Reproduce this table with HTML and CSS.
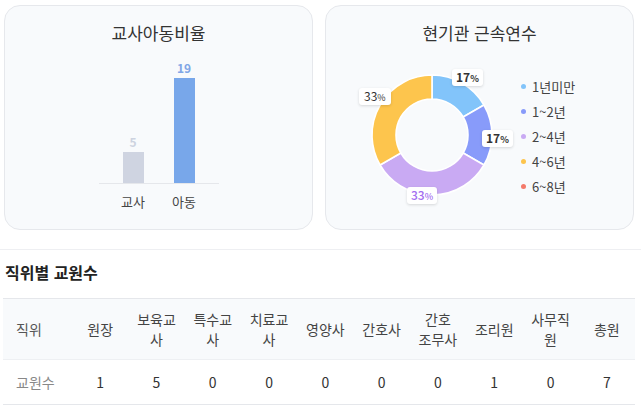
FILE: index.html
```html
<!DOCTYPE html>
<html lang="ko">
<head>
<meta charset="utf-8">
<title>교원 현황</title>
<link rel="stylesheet" href="styles.css">
</head>
<body>
<div class="cards">
  <section class="card">
    <h2 class="card-title">교사아동비율</h2>
    <div class="bar-chart">
      <div class="plot">
        <div class="bar-col">
          <span class="bar-value teacher">5</span>
          <div class="bar teacher" style="height:31px"></div>
        </div>
        <div class="bar-col">
          <span class="bar-value child">19</span>
          <div class="bar child" style="height:105px"></div>
        </div>
      </div>
      <div class="x-labels">
        <span class="x-label">교사</span>
        <span class="x-label">아동</span>
      </div>
    </div>
  </section>
  <section class="card">
    <h2 class="card-title">현기관 근속연수</h2>
    <div class="donut-row">
      <div class="donut">
        <svg class="donut-svg" viewBox="0 0 120 120" width="120" height="120">
          <path class="seg seg-1" d="M60 0 A60 60 0 0 1 111.96 30 L91.18 42 A36 36 0 0 0 60 24 Z"/>
          <path class="seg seg-2" d="M111.96 30 A60 60 0 0 1 111.96 90 L91.18 78 A36 36 0 0 0 91.18 42 Z"/>
          <path class="seg seg-3" d="M111.96 90 A60 60 0 0 1 8.04 90 L28.82 78 A36 36 0 0 0 91.18 78 Z"/>
          <path class="seg seg-4" d="M8.04 90 A60 60 0 0 1 60 0 L60 24 A36 36 0 0 0 28.82 78 Z"/>
        </svg>
        <span class="slice-label l1">17<small>%</small></span>
        <span class="slice-label l2">17<small>%</small></span>
        <span class="slice-label l3">33<small>%</small></span>
        <span class="slice-label l4">33<small>%</small></span>
      </div>
      <ul class="legend">
        <li><span class="dot c1"></span>1년미만</li>
        <li><span class="dot c2"></span>1~2년</li>
        <li><span class="dot c3"></span>2~4년</li>
        <li><span class="dot c4"></span>4~6년</li>
        <li><span class="dot c5"></span>6~8년</li>
      </ul>
    </div>
  </section>
</div>
<section class="staff">
  <h2 class="staff-title">직위별 교원수</h2>
  <table class="staff-table">
    <colgroup>
      <col class="col-head">
      <col><col><col><col><col><col><col><col><col><col>
    </colgroup>
    <thead>
      <tr>
        <th class="row-head">직위</th>
        <th>원장</th>
        <th>보육교사</th>
        <th>특수교사</th>
        <th>치료교사</th>
        <th>영양사</th>
        <th>간호사</th>
        <th>간호<br>조무사</th>
        <th>조리원</th>
        <th>사무직원</th>
        <th>총원</th>
      </tr>
    </thead>
    <tbody>
      <tr>
        <td class="row-head muted">교원수</td>
        <td>1</td>
        <td>5</td>
        <td>0</td>
        <td>0</td>
        <td>0</td>
        <td>0</td>
        <td>0</td>
        <td>1</td>
        <td>0</td>
        <td>7</td>
      </tr>
    </tbody>
  </table>
</section>
</body>
</html>
```
FILE: styles.css
```css
body {
  margin: 0;
  background: #fff;
  font-family: "Noto Sans CJK KR", "Noto Sans", sans-serif;
  color: #333;
}

.cards {
  display: grid;
  grid-template-columns: 309px 309px;
  gap: 12px;
  padding: 5px 0 0 4px;
}

.card {
  height: 225px;
  box-sizing: border-box;
  border: 1px solid #e6e8ec;
  border-radius: 16px;
  background: #f8fafc;
  padding-top: 16px;
}

.card-title {
  margin: 0;
  font-size: 17px;
  font-weight: 400;
  line-height: 22px;
  text-align: center;
  color: #333;
}

/* bar chart */
.bar-chart {
  width: 120px;
  margin: 0 auto;
}

.plot {
  height: 139px;
  display: flex;
  align-items: flex-end;
  gap: 30px;
  padding: 0 24px;
  border-bottom: 1px solid #e5e7eb;
}

.bar-col {
  width: 21px;
  display: flex;
  flex-direction: column;
  align-items: center;
}

.bar-value {
  font-size: 12px;
  font-weight: 700;
  line-height: 14px;
  margin-bottom: 3px;
}

.bar-value.teacher { color: #cdd3e0; }
.bar-value.child { color: #80a6e6; }

.bar { width: 21px; }
.bar.teacher { background: #cfd4e1; }
.bar.child { background: #78a7ea; }

.x-labels {
  display: flex;
  gap: 30px;
  padding: 0 24px;
  margin-top: 9px;
}

.x-label {
  width: 21px;
  display: flex;
  justify-content: center;
  white-space: nowrap;
  font-size: 13px;
  line-height: 18px;
  color: #444;
}

/* donut */
.donut-row {
  display: flex;
  align-items: flex-start;
  margin-top: 31px;
  padding-left: 46px;
}

.donut {
  position: relative;
  width: 120px;
  height: 120px;
  flex: none;
}

.donut-svg {
  display: block;
  overflow: visible;
}

.seg {
  stroke: #fff;
  stroke-width: 1.6;
  stroke-linejoin: round;
}

.seg-1 { fill: #82c4fa; }
.seg-2 { fill: #889bfa; }
.seg-3 { fill: #c9aaf3; }
.seg-4 { fill: #fdc54d; }

.slice-label {
  position: absolute;
  background: #fff;
  border-radius: 3px;
  box-shadow: 0 1px 3px rgba(0, 0, 0, 0.14);
  padding: 0 4px;
  font-size: 12px;
  font-weight: 700;
  line-height: 15px;
  color: #333;
  white-space: nowrap;
}

.slice-label small {
  font-size: 9px;
}

.l1 { left: 80px; top: -6px; }
.l2 { left: 110px; top: 55px; }
.l3 { left: 35px; top: 112px; color: #a46ef0; font-weight: 500; }
.l4 { left: -13px; top: 13px; font-weight: 400; padding: 0 5px; }

.legend {
  list-style: none;
  margin: -1px 0 0 29px;
  padding: 0;
}

.legend li {
  display: flex;
  align-items: center;
  gap: 6px;
  font-size: 13px;
  line-height: 25px;
  color: #444;
  white-space: nowrap;
}

.dot {
  width: 5px;
  height: 5px;
  border-radius: 50%;
}

.c1 { background: #82c4fa; }
.c2 { background: #889bfa; }
.c3 { background: #c9aaf3; }
.c4 { background: #fdc54d; }
.c5 { background: #f47a6a; }

/* staff table */
.staff {
  margin-top: 19px;
  border-top: 1px solid #eeeff2;
  padding: 11px 6px 0 3px;
}

.staff-title {
  margin: 0 0 15px 2px;
  font-size: 16px;
  font-weight: 700;
  line-height: 22px;
  color: #222;
}

.staff-table {
  width: 100%;
  border-collapse: collapse;
  table-layout: fixed;
}

.col-head { width: 69px; }

.staff-table th {
  background: #f8fafc;
  border-top: 1px solid #e5e7eb;
  border-bottom: 1px solid #eef0f3;
  padding: 10px 6px;
  font-size: 14px;
  font-weight: 400;
  line-height: 20px;
  color: #444;
  text-align: center;
}

.staff-table td {
  border-bottom: 1px solid #e5e7eb;
  padding: 12px 6px;
  font-size: 14px;
  line-height: 20px;
  color: #333;
  text-align: center;
}

.staff-table .row-head {
  text-align: left;
  padding-left: 13px;
  color: #555;
}

.staff-table .muted {
  color: #888;
}
```
